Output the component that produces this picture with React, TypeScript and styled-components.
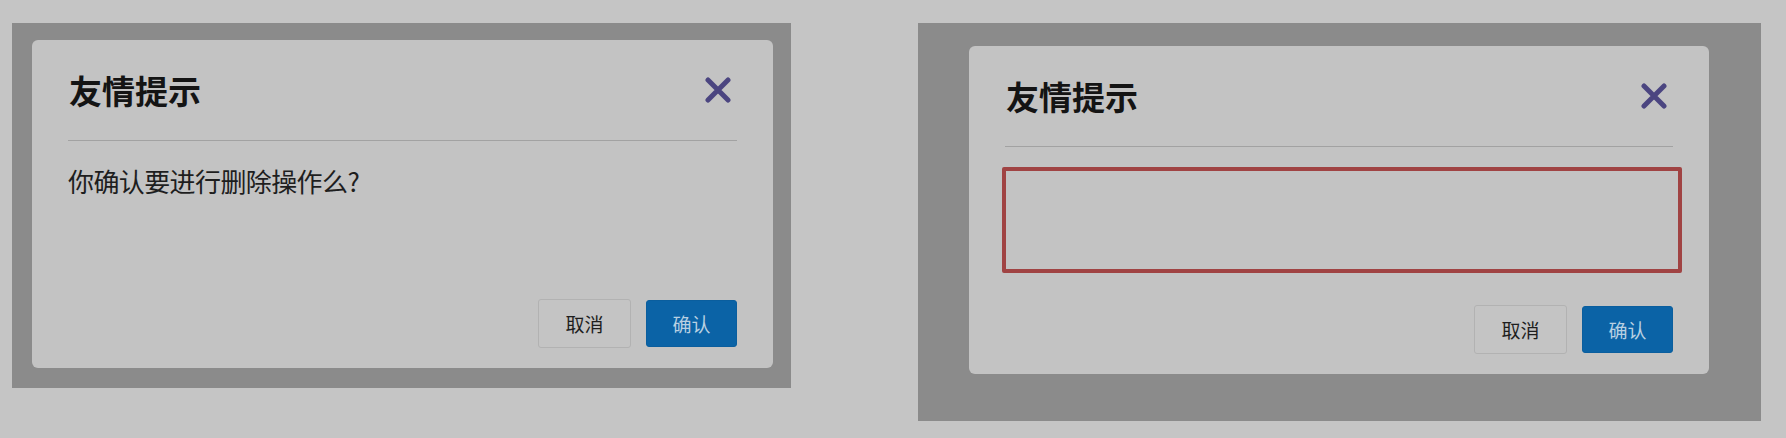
import React from "react";
import styled, { createGlobalStyle } from "styled-components";

const Global = createGlobalStyle`
  html, body { margin: 0; padding: 0; background: #c5c5c5; }
  body { font-family: "Noto Sans CJK SC", "Noto Sans", sans-serif; }
`;

const Page = styled.div`
  display: flex;
  align-items: flex-start;
  gap: 127px;
  padding: 23px 0 0 12px;
  width: 1786px;
  height: 438px;
  box-sizing: border-box;
`;

const Overlay = styled.div<{ $pad: string }>`
  background: #8b8b8b;
  padding: ${(p) => p.$pad};
`;

const Dialog = styled.div<{ $w: number }>`
  width: ${(p) => p.$w}px;
  height: 328px;
  box-sizing: border-box;
  background: #c3c3c3;
  border-radius: 6px;
  padding: 0 36px 20px;
  display: flex;
  flex-direction: column;
`;

const Header = styled.div`
  height: 100px;
  display: flex;
  align-items: center;
  justify-content: space-between;
  border-bottom: 1px solid #a2a2a2;
`;

const Title = styled.h3`
  margin: 0 0 0 1px;
  font-size: 33px;
  line-height: 40px;
  font-weight: 700;
  color: #141414;
`;

const Close = styled.button`
  margin-right: 5px;
  width: 28px;
  height: 28px;
  padding: 0;
  border: none;
  background: none;
  display: flex;
  align-items: center;
  justify-content: center;
  cursor: pointer;
`;

const Body = styled.div`
  padding-top: 20px;
  flex: 1;
`;

const Message = styled.p`
  margin: 0;
  font-size: 26px;
  line-height: 39px;
  letter-spacing: -0.6px;
  color: #1e1e1e;
`;

const Input = styled.div`
  width: 680px;
  height: 106px;
  box-sizing: border-box;
  margin-left: -3px;
  border: 4px solid #a04343;
  border-radius: 2px;
`;

const Footer = styled.div`
  display: flex;
  justify-content: flex-end;
  align-items: center;
  gap: 15px;
`;

const Button = styled.button<{ $primary?: boolean }>`
  font-family: "Noto Sans CJK SC", sans-serif;
  font-size: 19px;
  box-sizing: border-box;
  border-radius: 3px;
  cursor: pointer;
  padding: 0;
  width: ${(p) => (p.$primary ? 91 : 93)}px;
  height: ${(p) => (p.$primary ? 47 : 49)}px;
  background: ${(p) => (p.$primary ? "#0b63a6" : "#c4c4c4")};
  color: ${(p) => (p.$primary ? "#b8d0e2" : "#1e1e1e")};
  border: ${(p) => (p.$primary ? "1px solid #0a5e9e" : "1px solid #b2b2b2")};
`;

const XIcon = () => (
  <svg width="26" height="26" viewBox="0 0 26 26">
    <path
      d="M3 3 L23 23 M23 3 L3 23"
      stroke="#4b4580"
      strokeWidth="5"
      strokeLinecap="round"
    />
  </svg>
);

const Modal = ({
  width,
  children,
}: {
  width: number;
  children: React.ReactNode;
}) => (
  <Dialog $w={width}>
    <Header>
      <Title>友情提示</Title>
      <Close aria-label="关闭">
        <XIcon />
      </Close>
    </Header>
    <Body>{children}</Body>
    <Footer>
      <Button>取消</Button>
      <Button $primary>确认</Button>
    </Footer>
  </Dialog>
);

export default function App() {
  return (
    <>
      <Global />
      <Page>
        <Overlay $pad="17px 18px 20px 20px">
          <Modal width={741}>
            <Message>你确认要进行删除操作么?</Message>
          </Modal>
        </Overlay>
        <Overlay $pad="23px 52px 47px 51px">
          <Modal width={740}>
            <Input />
          </Modal>
        </Overlay>
      </Page>
    </>
  );
}
